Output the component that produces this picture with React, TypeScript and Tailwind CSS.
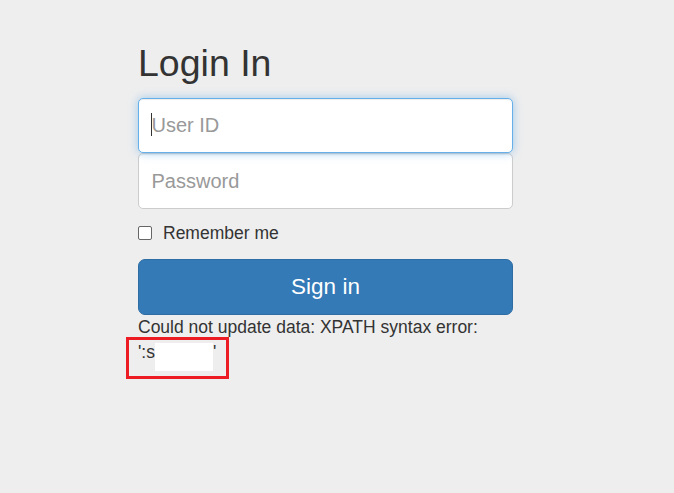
import React from "react";

export default function App() {
  return (
    <div
      className="min-h-screen w-full bg-[#eeeeee] text-[#333333] pt-[43px]"
      style={{ fontFamily: '"Liberation Sans", Arial, sans-serif' }}
    >
      <form className="ml-[138px] w-[375px]" onSubmit={(e) => e.preventDefault()}>
        <h2 className="text-[37.5px] leading-[1.1] font-normal mb-[14px]">Login In</h2>

        <div className="relative z-10">
          <input
            type="text"
            placeholder="User ID"
            className="block w-full h-[55px] px-[12.5px] text-[20px] bg-white border border-[#66afe9] rounded-[5px] outline-none caret-transparent placeholder:text-[#999999] shadow-[inset_0_1px_1px_rgba(0,0,0,0.075),0_0_10px_rgba(102,175,233,0.6)]"
          />
          <span className="absolute left-[13px] top-[15px] w-px h-[23px] bg-[#333333]" />
        </div>
        <input
          type="password"
          placeholder="Password"
          className="block w-full h-[56px] px-[12.5px] text-[20px] bg-white border border-[#cccccc] rounded-[5px] outline-none placeholder:text-[#999999] shadow-[inset_0_1px_1px_rgba(0,0,0,0.075)]"
        />

        <label className="flex items-center h-[25px] mt-[11px] mb-[14px] text-[17.5px] cursor-pointer">
          <input
            type="checkbox"
            className="appearance-none w-[14px] h-[14px] bg-white border border-[#666666] rounded-[2px] mr-[11px] shrink-0"
          />
          <span>Remember me</span>
        </label>

        <button
          type="submit"
          className="block w-full h-[56px] rounded-[7px] bg-[#337ab7] border border-[#2e6da4] text-white text-[22.5px]"
        >
          Sign in
        </button>

        <div className="relative text-[17.5px] leading-[25px]">
          <p>Could not update data: XPATH syntax error:</p>
          <p>
            ':s
            <span className="inline-block w-[58px] h-[28px] bg-white align-top relative top-[3px]" />
            '
          </p>
          <div className="absolute left-[-12px] top-[22px] w-[103px] h-[42px] border-[3px] border-[#ed1c24]" />
        </div>
      </form>
    </div>
  );
}
